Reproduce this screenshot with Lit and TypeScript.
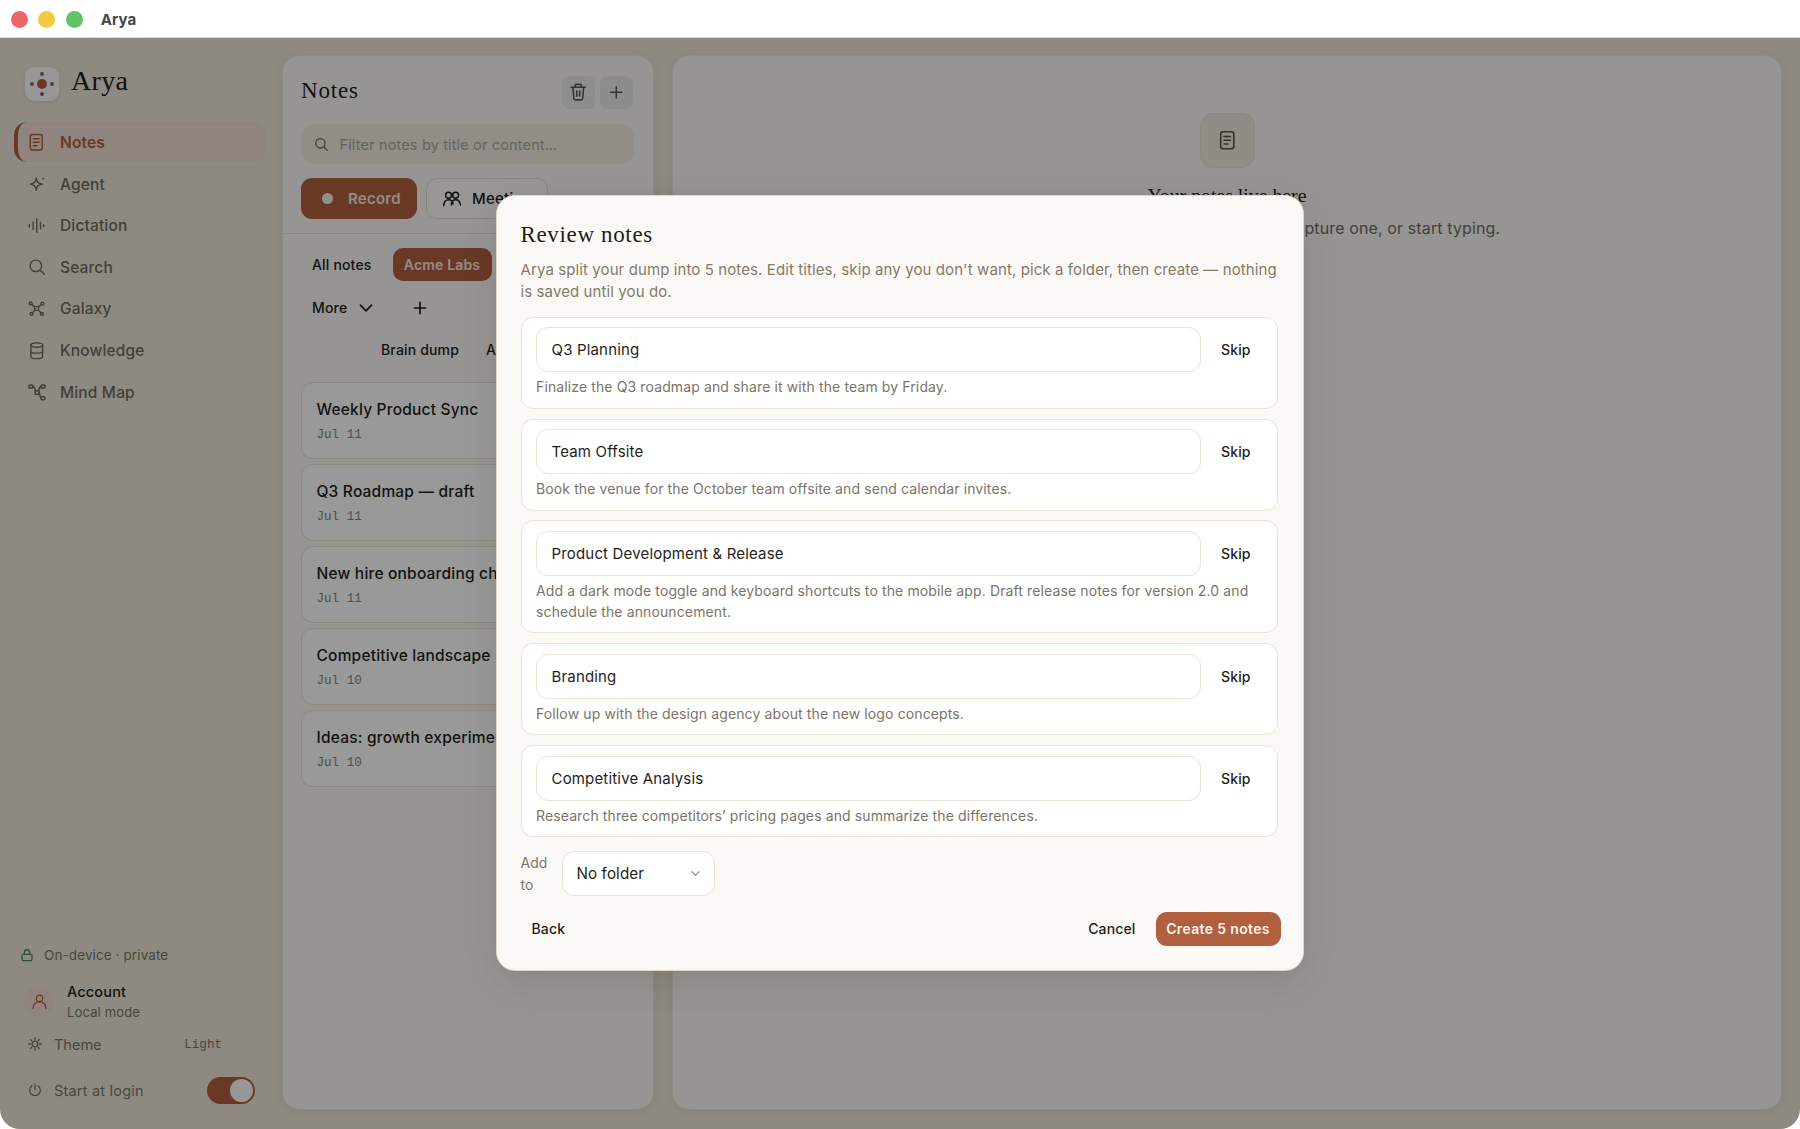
import { LitElement, html, css, svg } from "lit";
import { customElement } from "lit/decorators.js";

const icons: Record<string, unknown> = {
  note: svg`<rect x="5" y="3" width="14" height="18" rx="2.6"/><path d="M8.6 8h6.8M8.6 12h6.8M8.6 16h4.2"/>`,
  agent: svg`<path d="M11 4c.8 5.400 2.200 7.200 8 8.200-5.800 1-7.200 2.800-8 8.200-.8-5.400-2.200-7.200-8-8.200 5.800-1 7.200-2.800 8-8.200Z"/><path d="M20 4.800h.1" stroke-width="2.600"/>`,
  wave: svg`<path d="M2 10.500v3.500M7.200 7v10.500M12.400 2.500v19.500M17.600 7.500v9.500M22.200 10.800v2.800"/>`,
  search: svg`<circle cx="10.500" cy="10.500" r="7.700"/><path d="m16.200 16.200 5.600 5.600"/>`,
  galaxy: svg`<rect x="9.300" y="9.300" width="5.400" height="5.400" rx="1"/><circle cx="3.800" cy="4.800" r="2"/><circle cx="20.400" cy="5.200" r="2"/><circle cx="5" cy="19.600" r="2"/><circle cx="19.600" cy="19.600" r="2"/><path d="m5.400 6.200 3.900 3.500M18.900 6.600l-4.200 3.100M6.300 18l3.300-3.400M18.200 18.100l-3.600-3.500"/>`,
  db: svg`<ellipse cx="12" cy="5" rx="7.200" ry="2.700"/><path d="M4.800 5v14c0 1.500 3.200 2.700 7.200 2.700s7.200-1.200 7.200-2.700V5M4.800 12.200c0 1.500 3.200 2.700 7.200 2.700s7.200-1.200 7.200-2.700"/>`,
  map: svg`<rect x="1.200" y="2.600" width="5" height="4" rx="1"/><rect x="17.500" y="2.600" width="5" height="4" rx="1"/><rect x="9.600" y="10.300" width="5.200" height="4.600" rx="1"/><rect x="17.500" y="18.200" width="5" height="4" rx="1"/><path d="M6.200 4.600c2.400.4 2.800 2 3.100 4.200.1 1 .5 1.500 1.200 1.500M17.500 4.600c-2.200.4-2.800 2-3.100 5.700M14.800 13c1.400 0 .6 6.800 2.700 7.200"/>`,
  lock: svg`<rect x="3.500" y="11" width="17" height="10.500" rx="2"/><path d="M7.500 11V7.500a4.500 4.500 0 0 1 9 0V11"/>`,
  user: svg`<circle cx="12" cy="7.600" r="4.500"/><path d="M2.800 21.500c.5-5 3.600-9 9.200-9s8.700 4 9.200 9"/>`,
  sun: svg`<circle cx="12" cy="12" r="4.800"/><path d="M12 1v3.400M12 19.600V23M1 12h3.400M19.600 12H23M4.200 4.200l2.400 2.400M17.400 17.400l2.400 2.400M4.200 19.800l2.400-2.400M17.400 6.600l2.400-2.400"/>`,
  power: svg`<path d="M12 1.500v10M6.800 4.800a9.200 9.200 0 1 0 10.400 0"/>`,
  trash: svg`<path d="M2.800 5.400h18.400M8 5.400V3.400c0-1 .6-1.600 1.600-1.600h4.800c1 0 1.600.6 1.600 1.600v2M5 5.400l1.200 14c.1 1.600.9 2.500 2.400 2.500h6.800c1.500 0 2.300-.9 2.400-2.500l1.200-14M10 10.500l.2 6.500M14 10.500l-.2 6.500"/>`,
  plus: svg`<path d="M12 2.500v19M2.500 12h19"/>`,
  people: svg`<circle cx="7.400" cy="7" r="3.900"/><circle cx="16.800" cy="7" r="3.900"/><path d="M1 21c.2-4.800 2.600-8 6.400-8 3.200 0 5.600 2 6 5.400M23.200 20c-.4-4.400-2.600-7-6.400-7-3.400 0-5.200 2.600-5.600 6.800"/>`,
  chevron: svg`<path d="m2.500 7 9.500 10 9.500-10"/>`,
};

const icon = (name: string, size = 18, stroke = 1.6) => html`<svg
  class="icon" width=${size} height=${size} viewBox="0 0 24 24" fill="none"
  stroke="currentColor" stroke-width=${stroke} stroke-linecap="round" stroke-linejoin="round"
>${icons[name]}</svg>`;

const nav: [string, string, number, number][] = [
  ["note", "Notes", 20.5, 1.7], ["agent", "Agent", 18, 1.9], ["wave", "Dictation", 17, 2], ["search", "Search", 18, 1.9],
  ["galaxy", "Galaxy", 17, 2], ["db", "Knowledge", 19.5, 1.7], ["map", "Mind Map", 18, 2],
];

const notes = [
  ["Weekly Product Sync", "Jul 11"], ["Q3 Roadmap — draft", "Jul 11"],
  ["New hire onboarding checklist", "Jul 11"], ["Competitive landscape", "Jul 10"],
  ["Ideas: growth experiments", "Jul 10"],
];

const drafts = [
  ["Q3 Planning", "Finalize the Q3 roadmap and share it with the team by Friday."],
  ["Team Offsite", "Book the venue for the October team offsite and send calendar invites."],
  ["Product Development & Release", "Add a dark mode toggle and keyboard shortcuts to the mobile app. Draft release notes for version 2.0 and schedule the announcement."],
  ["Branding", "Follow up with the design agency about the new logo concepts."],
  ["Competitive Analysis", "Research three competitors’ pricing pages and summarize the differences."],
];

@customElement("app-root")
export class AppRoot extends LitElement {
  static styles = css`
    * { box-sizing: border-box; }
    :host { display: block; width: 1800px; height: 1129px; overflow: hidden; background: #fff;
      font-family: Inter, "Liberation Sans", sans-serif; color: #1f1e1b; }
    .icon { display: block; flex: none; }
    .titlebar { height: 38px; display: flex; align-items: center; padding: 1px 0 0 11px; border-bottom: 1px solid #dcdbd8; }
    .light { width: 17px; height: 17px; border-radius: 50%; margin-right: 10.400px; }
    .red { background: #ee6562; } .yellow { background: #f3c944; } .green { background: #62c466; }
    .wintitle { font-size: 15px; font-weight: 700; color: #454545; margin-left: 7.500px; letter-spacing: .15px; }
    .body { position: relative; height: 1091px; display: flex; background: #ede6d9; border-radius: 0 0 20px 20px; overflow: hidden; }
    .sidebar { width: 282px; display: flex; flex-direction: column; padding: 28px 16px 0 14px; }
    .brand { display: flex; align-items: center; height: 36px; padding-left: 11px; margin-bottom: 20.400px; }
    .logo { width: 34px; height: 34px; border-radius: 9px; background: #fdfcfa; box-shadow: 0 1px 3px rgba(90,70,40,.2); }
    .serif { font-family: "Liberation Serif", serif; }
    .brandname { font-size: 28px; line-height: 34px; margin: -6px 0 0 12px; letter-spacing: .3px; }
    .nav { display: flex; flex-direction: column; gap: 1.650px; }
    .navitem { height: 40px; display: flex; align-items: center; padding-left: 14px; gap: 15px; font-size: 15.500px; font-weight: 500;
      color: #716b60; border-radius: 13px; letter-spacing: .15px; }
    .navicon { width: 17px; display: flex; justify-content: center; }
    .navitem.on { color: #b05f3f; background: #f0ddd3; border-left: 4px solid #b05f3f; padding-left: 10px; font-weight: 600; }
    .foot { margin-top: auto; height: 194px; display: flex; flex-direction: column; border-top: 1px solid #e9e3d8; color: #7c7567; }
    .privacy { display: flex; align-items: center; height: 20px; margin: 9px 0 0 6px; gap: 10px; font-size: 13.500px; letter-spacing: .1px; }
    .privacy .icon { color: #4c8456; }
    .account { display: flex; align-items: center; margin: 14px 0 0 10px; height: 44px; gap: 13px; }
    .avatar { width: 30px; height: 30px; border-radius: 50%; background: #f0ddd3; color: #b05f3f; display: grid; place-items: center; }
    .accname { font-size: 14.500px; line-height: 21px; font-weight: 500; color: #1f1e1b; letter-spacing: .15px; }
    .accmode { font-size: 13px; line-height: 20px; letter-spacing: .15px; }
    .row { display: flex; align-items: center; height: 44px; padding: 0 11px 0 14px; gap: 12px; font-size: 14.500px; margin-top: 4px; letter-spacing: .2px; }
    .row.theme { height: 40px; margin-top: 1px; letter-spacing: 0; }
    .mono { font-family: "Liberation Mono", monospace; font-size: 12.600px; letter-spacing: 0; }
    .row .mono { margin: 2px 33px 0 auto; }
    .toggle { margin-left: auto; width: 48px; height: 27px; border-radius: 14px; background: #b05f3f; padding: 2px; display: flex; justify-content: flex-end; }
    .knob { width: 23px; height: 23px; border-radius: 50%; background: #fdfcfa; }
    .panel { background: #faf8f5; border: 1px solid #eee9df; border-radius: 18px; margin: 17px 0 19px; box-shadow: 0 2px 8px rgba(90,70,40,.1); overflow: hidden; }
    .list { width: 372px; padding: 0 19px 0 18px; }
    .detail { width: 1110px; margin-left: 18px; display: flex; flex-direction: column; align-items: center; padding-top: 57px; }
    .lhead { display: flex; align-items: flex-start; height: 68px; padding: 20px 1px 0 0; gap: 5px; }
    .ltitle { flex: 1; font-size: 23px; line-height: 30px; letter-spacing: .8px; }
    .sq { width: 33px; height: 33px; border-radius: 7px; background: #ececed; display: grid; place-items: center; color: #595349; }
    .filter { height: 40px; border-radius: 12px; background: #f3ede1; display: flex; align-items: center; padding-left: 13px; gap: 11px; font-size: 14.500px; color: #a9a59d; letter-spacing: .15px; }
    .filter .icon { color: #716b60; }
    .acts { display: flex; gap: 9px; margin-top: 14px; }
    .record, .meeting { height: 41px; border-radius: 11px; display: flex; align-items: center; font-size: 15px; font-weight: 600; letter-spacing: .25px; }
    .record { width: 116px; background: #b05f3f; color: #f5e8e1; padding-left: 21px; gap: 15px; }
    .dot { width: 11px; height: 11px; border-radius: 50%; background: #f8f1ec; }
    .meeting { width: 122px; background: #fdfcfb; border: 1px solid #e4dccb; padding-left: 16px; gap: 11px; font-weight: 500; }
    .rule { height: 1px; background: #e9e2d4; margin: 14px -19px 0; }
    .chips { display: flex; align-items: center; height: 33px; margin-top: 14px; font-size: 14px; font-weight: 500; letter-spacing: .17px; }
    .plain { padding: 0 11px; }
    .chip { margin-left: 10px; height: 33px; width: 99px; border-radius: 10px; background: #b05f3f; color: #f5e8e1; display: grid; place-items: center; font-weight: 600; }
    .chips.more { margin-top: 10px; }
    .chips.more .last { margin-left: 40px; }
    .chips.more .plain { padding-right: 12px; }
    .chips.dump { margin-top: 9px; padding-left: 69px; }
    .chips.dump .plain + .plain { margin-left: 5px; }
    .card { height: 77px; width: 334px; border: 1px solid #e9e2d4; border-radius: 12px; background: #fff; padding: 15px 14.500px 0; margin-bottom: 5.100px; white-space: nowrap; overflow: hidden; }
    .cards { margin-top: 16px; }
    .ctitle { font-size: 15.500px; line-height: 24px; font-weight: 500; letter-spacing: .2px; }
    .card .mono { color: #8b8374; line-height: 27px; }
    .glyph { width: 55px; height: 55px; border-radius: 13px; background: #f1ebdf; border: 1px solid #e9e2d4; display: grid; place-items: center; color: #595349; }
    .etitle { font-size: 19.800px; line-height: 28px; margin-top: 13px; }
    .etext { font-size: 16px; line-height: 24px; margin-top: 7px; color: #716b60; white-space: nowrap; letter-spacing: .12px; }
    .overlay { position: absolute; inset: 0; background: rgba(0,0,0,.4); display: flex; justify-content: center; align-items: flex-start; padding: 157px 0 0 0; }
    .modal { width: 808px; height: 776px; border-radius: 19px; background: #fbf9f5; border: 1px solid #e0d6c8; box-shadow: 0 12px 36px rgba(40,30,10,.12);
      padding: 23.500px 23px 0 23.500px; display: flex; flex-direction: column; }
    .mtitle { font-size: 23px; line-height: 30px; letter-spacing: .65px; }
    .mdesc { font-size: 15px; line-height: 22.400px; color: #837b6c; margin: 9px 0 13.500px; white-space: nowrap; letter-spacing: .1px; }
    .drafts { display: flex; flex-direction: column; gap: 9.800px; width: 757px; }
    .draft { border: 1.500px solid #eae3d6; border-radius: 12px; background: #fff; padding: 9.500px 13.500px 0 14.500px; height: 92px; }
    .draft.tall { height: 113px; }
    .top { display: flex; align-items: center; }
    .input { width: 665px; height: 45px; border: 1.500px solid #eae3d6; border-radius: 12px; display: flex; align-items: center; padding-left: 14.500px; font-size: 15px; letter-spacing: .17px; }
    .skip { font-size: 14px; font-weight: 500; margin-left: 20px; letter-spacing: .15px; }
    .dtext { font-size: 14px; line-height: 21.500px; color: #7b7466; margin-top: 4px; letter-spacing: .12px; }
    .addrow { display: flex; align-items: center; margin-top: 14px; height: 45px; }
    .addto { width: 41px; font-size: 14px; line-height: 21.500px; color: #7b7466; }
    .select { width: 153px; height: 45px; border: 1.500px solid #eae3d6; border-radius: 12px; background: #fff; display: flex; align-items: center; justify-content: space-between; padding: 0 14px; font-size: 15.200px; letter-spacing: .1px; }
    .select .icon { color: #9a9284; }
    .btns { display: flex; align-items: center; width: 760px; height: 34px; margin-top: 15.500px; font-size: 14px; font-weight: 500; letter-spacing: .15px; }
    .back { margin-left: 11px; flex: 1; }
    .create { width: 125px; height: 34px; border-radius: 11px; background: #b05f3f; color: #fcf3ee; display: grid; place-items: center; margin-left: 20px; font-weight: 600; letter-spacing: .35px; }
  `;

  render() {
    return html`
      <header class="titlebar">
        <span class="light red"></span><span class="light yellow"></span><span class="light green"></span>
        <span class="wintitle">Arya</span>
      </header>
      <div class="body">
        <aside class="sidebar">
          <div class="brand">
            <svg class="logo" viewBox="0 0 34 34">
              <circle cx="17" cy="17" r="5" fill="#b05f3f"/>
              <g fill="#6c6a56"><circle cx="17" cy="7" r="1.900"/><circle cx="17" cy="27" r="1.900"/><circle cx="7" cy="17" r="1.900"/><circle cx="27" cy="17" r="1.900"/></g>
            </svg>
            <span class="brandname serif">Arya</span>
          </div>
          <nav class="nav">
            ${nav.map(([i, label, size, stroke], n) => html`<div class="navitem ${n === 0 ? "on" : ""}"><span class="navicon">${icon(i, size, stroke)}</span><span>${label}</span></div>`)}
          </nav>
          <div class="foot">
            <div class="privacy">${icon("lock", 14, 2.2)}<span>On-device · private</span></div>
            <div class="account">
              <span class="avatar">${icon("user", 17, 1.9)}</span>
              <div><div class="accname">Account</div><div class="accmode">Local mode</div></div>
            </div>
            <div class="row theme">${icon("sun", 14, 2.3)}<span>Theme</span><span class="mono">Light</span></div>
            <div class="row">${icon("power", 14, 2.2)}<span>Start at login</span><span class="toggle"><span class="knob"></span></span></div>
          </div>
        </aside>
        <section class="panel list">
          <div class="lhead">
            <div class="ltitle serif">Notes</div>
            <span class="sq">${icon("trash", 18.5, 2)}</span>
            <span class="sq">${icon("plus", 14.5, 2.4)}</span>
          </div>
          <div class="filter">${icon("search", 14.5, 2.2)}<span>Filter notes by title or content…</span></div>
          <div class="acts">
            <div class="record"><span class="dot"></span><span>Record</span></div>
            <div class="meeting">${icon("people", 18, 2)}<span>Meeting</span></div>
          </div>
          <div class="rule"></div>
          <div class="chips"><span class="plain">All notes</span><span class="chip">Acme Labs</span></div>
          <div class="chips more"><span class="plain">More</span>${icon("chevron", 14, 2.9)}<span class="last">${icon("plus", 14, 2.9)}</span></div>
          <div class="chips dump"><span class="plain">Brain dump</span><span class="plain">Add note</span></div>
          <div class="cards">
            ${notes.map(([t, d]) => html`<div class="card"><div class="ctitle">${t}</div><div class="mono">${d}</div></div>`)}
          </div>
        </section>
        <section class="panel detail">
          <div class="glyph">${icon("note", 22.5, 1.7)}</div>
          <div class="etitle serif">Your notes live here</div>
          <div class="etext">Choose a note from the list to open it here, capture one, or start typing.</div>
        </section>
        <div class="overlay">
          <div class="modal">
            <div class="mtitle serif">Review notes</div>
            <div class="mdesc">Arya split your dump into 5 notes. Edit titles, skip any you don't want, pick a folder, then create — nothing<br>is saved until you do.</div>
            <div class="drafts">
              ${drafts.map(([t, d], n) => html`<div class="draft ${n === 2 ? "tall" : ""}">
                <div class="top"><div class="input">${t}</div><span class="skip">Skip</span></div>
                <div class="dtext">${d}</div>
              </div>`)}
            </div>
            <div class="addrow"><span class="addto">Add<br>to</span><div class="select"><span>No folder</span>${icon("chevron", 9, 3.6)}</div></div>
            <div class="btns"><span class="back">Back</span><span>Cancel</span><span class="create">Create 5 notes</span></div>
          </div>
        </div>
      </div>`;
  }
}
